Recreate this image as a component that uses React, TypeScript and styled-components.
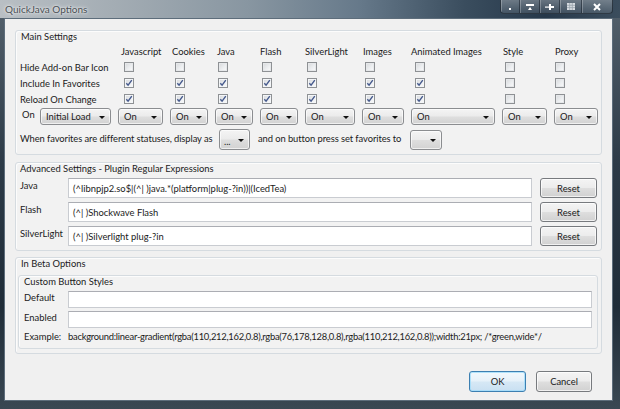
import React from 'react';
import styled, { createGlobalStyle } from 'styled-components';

const Global = createGlobalStyle`
  html, body { margin: 0; padding: 0; width: 620px; height: 409px; overflow: hidden; }
  body { font-family: Lato, "Open Sans", sans-serif; font-size: 9.4px; color: #1b1b1b; }
  * { box-sizing: border-box; }
`;

const Frame = styled.div`
  width: 620px;
  height: 409px;
  display: flex;
  flex-direction: column;
  background: linear-gradient(180deg, #55626d 0%, #2c3a47 40%, #1f2c38 75%, #3a4853 100%);
`;

const TitleBar = styled.div`
  height: 18px;
  flex: 0 0 18px;
  display: flex;
  align-items: flex-start;
  background: linear-gradient(90deg, #b9bfc4 0%, #a4adb4 18%, #8896a1 40%, #66798a 58%, #3a4d5e 75%, #26384a 88%, #3b4d5d 100%);
`;

const Title = styled.div`
  padding: 3px 0 0 5px;
  font-size: 10px;
  color: #4a4f54;
  text-shadow: 0 0 4px rgba(255, 255, 255, 0.9), 0 0 2px rgba(255, 255, 255, 0.8);
`;

const Controls = styled.div`
  margin-left: auto;
  margin-right: 7px;
  height: 14px;
  display: flex;
  border: 1px solid rgba(20, 30, 40, 0.7);
  border-top: none;
  border-radius: 0 0 4px 4px;
  overflow: hidden;
  background: linear-gradient(180deg, rgba(255, 255, 255, 0.3), rgba(255, 255, 255, 0.1));
`;

const CtlButton = styled.div<{ $w: number }>`
  width: ${p => p.$w}px;
  height: 100%;
  display: flex;
  align-items: center;
  justify-content: center;
  border-left: 1px solid rgba(20, 30, 40, 0.55);
  box-shadow: inset 1px 0 0 rgba(255, 255, 255, 0.25);
  &:first-child { border-left: none; }
`;

const Body = styled.div`
  flex: 1;
  display: flex;
  padding: 0 7px 8px 4px;
  min-height: 0;
`;

const Content = styled.div`
  flex: 1;
  background: #f0f0f0;
  border: 1px solid #5d6d7b;
  display: flex;
  flex-direction: column;
  padding: 11px 10px 8px 10px;
`;

const Group = styled.div<{ $gap?: number }>`
  border: 1px solid #d5dbe0;
  border-radius: 3px;
  background: #f2f2f2;
  box-shadow: inset 1px 1px 0 #fcfcfc;
  display: flex;
  flex-direction: column;
  margin-top: ${p => p.$gap ?? 0}px;
`;

const Caption = styled.div<{ $pad?: number }>`
  height: 12px;
  line-height: 12px;
  padding-left: ${p => p.$pad ?? 5}px;
  white-space: nowrap;
`;

const SettingsGrid = styled.div<{ $cols: string }>`
  display: grid;
  grid-template-columns: ${p => p.$cols};
  grid-template-rows: 16px 16px 16px 16px 19px;
  column-gap: 7px;
  padding-left: 4px;
  align-items: center;
`;

const HeadCell = styled.div<{ $off: number }>`
  padding-left: ${p => p.$off}px;
  white-space: nowrap;
`;

const RowLabel = styled.div`
  white-space: nowrap;
`;

const CheckCell = styled.div<{ $off: number }>`
  padding-left: ${p => p.$off}px;
  display: flex;
  align-items: center;
`;

const Box = styled.div<{ $on: boolean }>`
  width: 10px;
  height: 10px;
  border: 1px solid #8e9194;
  background: linear-gradient(135deg, #d6d8da 0%, #eceef0 55%, #fbfbfb 100%);
  box-shadow: inset 0 0 0 1px ${p => (p.$on ? '#f4f6f8' : '#e6e8ea')};
  display: flex;
  align-items: center;
  justify-content: center;
`;

const OnCell = styled.div`
  display: flex;
  align-items: flex-start;
  height: 17px;
`;

const OnLabel = styled.div`
  width: 20px;
  padding: 1px 0 0 2px;
`;

const Drop = styled.div<{ $w?: number; $h?: number; $bottom?: boolean }>`
  position: relative;
  flex: 0 0 auto;
  width: ${p => (p.$w ? `${p.$w}px` : '100%')};
  height: ${p => p.$h ?? 17}px;
  border: 1px solid #8b8d90;
  border-radius: 3px;
  background: linear-gradient(180deg, #f4f4f4 0%, #ebebeb 48%, #dedede 52%, #d2d2d2 100%);
  box-shadow: inset 0 0 0 1px rgba(255, 255, 255, 0.65);
  display: flex;
  align-items: ${p => (p.$bottom ? 'flex-end' : 'center')};
  padding: ${p => (p.$bottom ? '0 0 2px 4px' : '0 0 0 5px')};
  white-space: nowrap;
  &::after {
    content: '';
    position: absolute;
    right: 5px;
    top: 50%;
    margin-top: -1px;
    border-left: 3px solid transparent;
    border-right: 3px solid transparent;
    border-top: 3px solid #111;
  }
`;

const FavRow = styled.div`
  display: flex;
  align-items: center;
  height: 21px;
  margin-top: 3px;
  padding-left: 4px;
  margin-bottom: 4px;
  letter-spacing: -0.08px;
`;

const FavText = styled.div<{ $w: number; $pad?: number }>`
  width: ${p => p.$w}px;
  flex: 0 0 ${p => p.$w}px;
  padding-left: ${p => p.$pad ?? 0}px;
  margin-bottom: 3px;
  white-space: nowrap;
`;

const ExprRows = styled.div`
  display: flex;
  flex-direction: column;
  gap: 4px;
  padding: 3px 4px 4px 4px;
`;

const ExprRow = styled.div`
  display: flex;
  align-items: flex-start;
  height: 20px;
`;

const FieldLabel = styled.div<{ $w: number; $top?: number }>`
  width: ${p => p.$w}px;
  flex: 0 0 ${p => p.$w}px;
  padding-top: ${p => p.$top ?? 2}px;
  white-space: nowrap;
  letter-spacing: 0;
`;

const TextBox = styled.div<{ $h?: number }>`
  flex: 1;
  height: ${p => p.$h ?? 20}px;
  background: #fff;
  border: 1px solid #c9ccd1;
  border-top-color: #abadb3;
  display: flex;
  align-items: center;
  padding-left: 4px;
  white-space: nowrap;
  overflow: hidden;
`;

const Button = styled.div<{ $w: number; $h?: number; $focus?: boolean }>`
  width: ${p => p.$w}px;
  height: ${p => p.$h ?? 20}px;
  flex: 0 0 ${p => p.$w}px;
  border: 1px solid ${p => (p.$focus ? '#3c7fb1' : '#777a7e')};
  border-radius: 3px;
  background: ${p =>
    p.$focus
      ? 'linear-gradient(180deg, #f2f8fc 0%, #e6f1f9 48%, #d6e8f5 52%, #c9e0f2 100%)'
      : 'linear-gradient(180deg, #f4f4f4 0%, #ececec 48%, #dedede 52%, #d1d1d1 100%)'};
  box-shadow: inset 0 0 0 1px ${p => (p.$focus ? 'rgba(160, 220, 250, 0.8)' : 'rgba(255, 255, 255, 0.7)')};
  display: flex;
  align-items: center;
  justify-content: center;
`;

const ResetButton = styled(Button)`
  margin-left: 8px;
`;

const Inner = styled.div`
  border: 1px solid #d5dbe0;
  border-radius: 3px;
  background: #f2f2f2;
  box-shadow: inset 1px 1px 0 #fcfcfc;
  margin: 5px 3px 4px 2px;
  display: flex;
  flex-direction: column;
`;

const StyleRows = styled.div`
  display: flex;
  flex-direction: column;
  gap: 3px;
  padding: 3px 5px 0 5px;
`;

const StyleRow = styled.div`
  display: flex;
  align-items: flex-start;
  height: 17px;
`;

const ExampleRow = styled.div`
  display: flex;
  align-items: center;
  height: 13px;
  padding: 0 5px 0 5px;
  margin: 2px 0 5px 0;
  white-space: nowrap;
  letter-spacing: -0.25px;
`;

const ButtonRow = styled.div`
  display: flex;
  justify-content: flex-end;
  gap: 10px;
  margin-top: auto;
  padding-right: 10px;
`;

type Col = { name: string; width: number; hd: number; cb: number; checks: boolean[] };

const cols: Col[] = [
  { name: 'Javascript', width: 45, hd: 3, cb: 6, checks: [false, true, true] },
  { name: 'Cookies', width: 38, hd: 2, cb: 5, checks: [false, true, true] },
  { name: 'Java', width: 38, hd: 2, cb: 3, checks: [false, true, true] },
  { name: 'Flash', width: 38, hd: 0, cb: 2, checks: [false, true, true] },
  { name: 'SilverLight', width: 50, hd: 0, cb: 2, checks: [false, true, true] },
  { name: 'Images', width: 42, hd: 1, cb: 3, checks: [false, true, true] },
  { name: 'Animated Images', width: 84, hd: 0, cb: 4, checks: [false, true, true] },
  { name: 'Style', width: 45, hd: 1, cb: 3, checks: [false, false, false] },
  { name: 'Proxy', width: 44, hd: 1, cb: 1, checks: [false, false, false] },
];

const rowLabels = ['Hide Add-on Bar Icon', 'Include In Favorites', 'Reload On Change'];

const Check = ({ on }: { on: boolean }) => (
  <Box $on={on}>
    {on && (
      <svg width="8" height="8" viewBox="0 0 8 8">
        <path d="M1.3 4.2 L3.1 6.2 L6.8 1.2" fill="none" stroke="#45598c" strokeWidth="1.4" />
      </svg>
    )}
  </Box>
);

const Glyph = {
  dot: (
    <svg width="6" height="8" viewBox="0 0 6 8">
      <rect x="2" y="5" width="2" height="2" fill="#fff" />
    </svg>
  ),
  top: (
    <svg width="8" height="8" viewBox="0 0 8 8">
      <rect x="0" y="1" width="8" height="2" fill="#fff" />
      <path d="M2 7 L4 4 L6 7 Z" fill="#fff" />
    </svg>
  ),
  pin: (
    <svg width="9" height="8" viewBox="0 0 9 8">
      <rect x="0" y="3.5" width="4" height="1.2" fill="#fff" />
      <rect x="4" y="1" width="2" height="6" fill="#fff" />
      <rect x="6" y="3" width="3" height="2" fill="#fff" />
    </svg>
  ),
  grid: (
    <svg width="8" height="7" viewBox="0 0 8 7">
      <rect x="0" y="0" width="8" height="7" fill="#d8dde2" />
      <path d="M0 2.3 H8 M0 4.6 H8 M2.7 0 V7 M5.3 0 V7" stroke="#9aa4ad" strokeWidth="0.8" />
    </svg>
  ),
  close: (
    <svg width="10" height="8" viewBox="0 0 10 8">
      <path d="M2 1 L8 7 M8 1 L2 7" stroke="#fff" strokeWidth="2" />
    </svg>
  ),
};

export default function App() {
  const template = ['91px', ...cols.map(c => `${c.width}px`)].join(' ');
  return (
    <>
      <Global />
      <Frame>
        <TitleBar>
          <Title>QuickJava Options</Title>
          <Controls>
            <CtlButton $w={18}>{Glyph.dot}</CtlButton>
            <CtlButton $w={20}>{Glyph.top}</CtlButton>
            <CtlButton $w={20}>{Glyph.pin}</CtlButton>
            <CtlButton $w={22}>{Glyph.grid}</CtlButton>
            <CtlButton $w={31}>{Glyph.close}</CtlButton>
          </Controls>
        </TitleBar>
        <Body>
          <Content>
            <Group>
              <Caption>Main Settings</Caption>
              <SettingsGrid $cols={template}>
                <div />
                {cols.map(c => (
                  <HeadCell key={c.name} $off={c.hd}>
                    {c.name}
                  </HeadCell>
                ))}
                {rowLabels.map((label, r) => (
                  <React.Fragment key={label}>
                    <RowLabel>{label}</RowLabel>
                    {cols.map(c => (
                      <CheckCell key={c.name} $off={c.cb}>
                        <Check on={c.checks[r]} />
                      </CheckCell>
                    ))}
                  </React.Fragment>
                ))}
                <OnCell>
                  <OnLabel>On</OnLabel>
                  <Drop $w={71}>Initial Load</Drop>
                </OnCell>
                {cols.map(c => (
                  <OnCell key={c.name}>
                    <Drop>On</Drop>
                  </OnCell>
                ))}
              </SettingsGrid>
              <FavRow>
                <FavText $w={199}>When favorites are different statuses, display as</FavText>
                <Drop $w={31} $h={21} $bottom>
                  ...
                </Drop>
                <FavText $w={160} $pad={8}>
                  and on button press set favorites to
                </FavText>
                <Drop $w={32} $h={20} />
              </FavRow>
            </Group>

            <Group $gap={7}>
              <Caption $pad={4}>Advanced Settings - Plugin Regular Expressions</Caption>
              <ExprRows>
                <ExprRow>
                  <FieldLabel $w={48}>Java</FieldLabel>
                  <TextBox>(^libnpjp2.so$|(^| )java.*(platform|plug-?in))|(IcedTea)</TextBox>
                  <ResetButton $w={57}>Reset</ResetButton>
                </ExprRow>
                <ExprRow>
                  <FieldLabel $w={48}>Flash</FieldLabel>
                  <TextBox>(^| )Shockwave Flash</TextBox>
                  <ResetButton $w={57}>Reset</ResetButton>
                </ExprRow>
                <ExprRow>
                  <FieldLabel $w={48}>SilverLight</FieldLabel>
                  <TextBox>(^| )Silverlight plug-?in</TextBox>
                  <ResetButton $w={57}>Reset</ResetButton>
                </ExprRow>
              </ExprRows>
            </Group>

            <Group $gap={6}>
              <Caption>In Beta Options</Caption>
              <Inner>
                <Caption>Custom Button Styles</Caption>
                <StyleRows>
                  <StyleRow>
                    <FieldLabel $w={44} $top={1}>Default</FieldLabel>
                    <TextBox $h={17} />
                  </StyleRow>
                  <StyleRow>
                    <FieldLabel $w={44} $top={1}>Enabled</FieldLabel>
                    <TextBox $h={17} />
                  </StyleRow>
                </StyleRows>
                <ExampleRow>
                  <FieldLabel $w={44} $top={0}>Example:</FieldLabel>
                  background:linear-gradient(rgba(110,212,162,0.8),rgba(76,178,128,0.8),rgba(110,212,162,0.8));width:21px; /*green,wide*/
                </ExampleRow>
              </Inner>
            </Group>

            <ButtonRow>
              <Button $w={57} $h={21} $focus>OK</Button>
              <Button $w={56} $h={21}>Cancel</Button>
            </ButtonRow>
          </Content>
        </Body>
      </Frame>
    </>
  );
}
